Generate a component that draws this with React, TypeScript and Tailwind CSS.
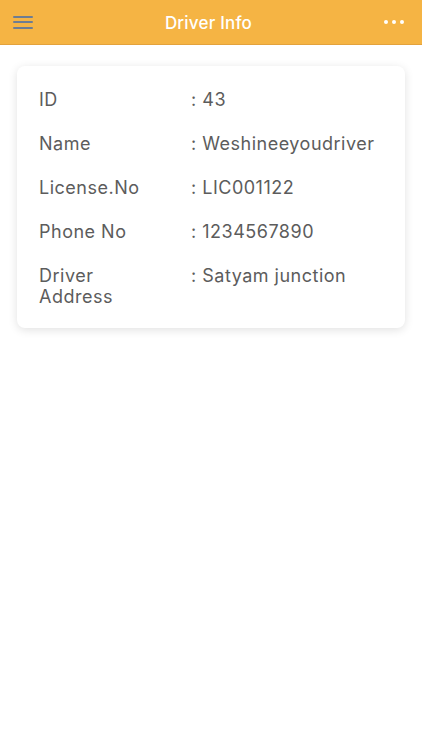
import React from "react";

const rows: [string, string][] = [
  ["ID", ": 43"],
  ["Name", ": Weshineeyoudriver"],
  ["License.No", ": LIC001122"],
  ["Phone No", ": 1234567890"],
  ["Driver Address", ": Satyam junction"],
];

export default function App() {
  return (
    <div className="w-[422px] h-[750px] bg-white" style={{ fontFamily: "Inter, 'Open Sans', sans-serif" }}>
      <div className="h-[45px] bg-[#f5b444] border-b border-[#e3a23d] flex items-center justify-between px-[13px]">
        <div className="flex flex-col gap-[3.5px] w-[20px]">
          <div className="h-[2px] bg-[#6e7d92] rounded" />
          <div className="h-[2px] bg-[#6e7d92] rounded" />
          <div className="h-[2px] bg-[#6e7d92] rounded" />
        </div>
        <div className="text-white text-[17px] font-medium tracking-[0.2px] pt-[3px]">Driver Info</div>
        <div className="flex gap-[4px] pr-[5px]">
          <div className="w-[4px] h-[4px] rounded-full bg-white" />
          <div className="w-[4px] h-[4px] rounded-full bg-white" />
          <div className="w-[4px] h-[4px] rounded-full bg-white" />
        </div>
      </div>
      <div className="mx-[17px] mt-[21px] bg-white rounded-[8px] shadow-[0_2px_10px_rgba(0,0,0,0.12)] pt-[23px] pb-[21px] px-[22px] flex flex-col gap-[23px]">
        {rows.map(([k, v]) => (
          <div key={k} className="flex text-[18px] leading-[21px] text-[#5c5c5c] tracking-[0.5px]">
            <div className="w-[152px] pr-[40px]">{k}</div>
            <div>{v}</div>
          </div>
        ))}
      </div>
    </div>
  );
}
